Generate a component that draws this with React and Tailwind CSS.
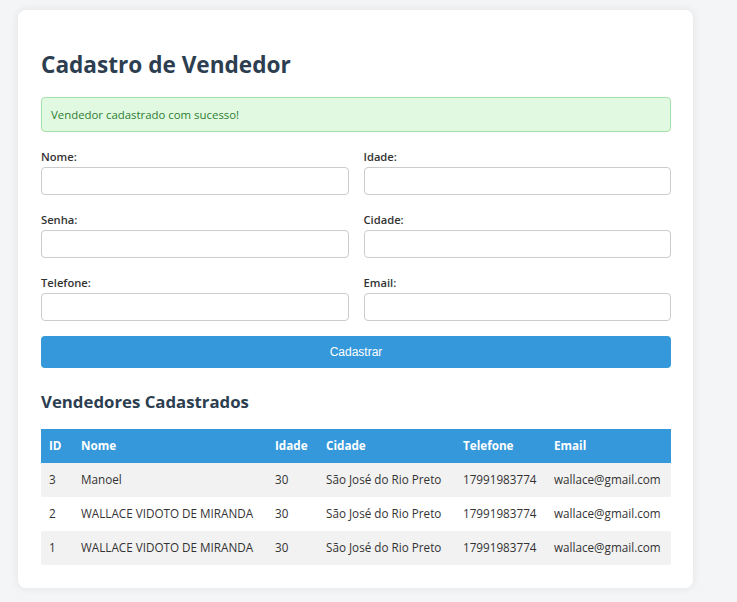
import React from "react";

const vendedores = [
  { id: 3, nome: "Manoel", idade: 30, cidade: "São José do Rio Preto", telefone: "17991983774", email: "wallace@gmail.com" },
  { id: 2, nome: "WALLACE VIDOTO DE MIRANDA", idade: 30, cidade: "São José do Rio Preto", telefone: "17991983774", email: "wallace@gmail.com" },
  { id: 1, nome: "WALLACE VIDOTO DE MIRANDA", idade: 30, cidade: "São José do Rio Preto", telefone: "17991983774", email: "wallace@gmail.com" },
];

function Field({ label, type = "text" }) {
  return (
    <div className="flex flex-col">
      <label className="mb-[2px] text-[11.2px] font-semibold leading-[17px] text-[#333]">{label}</label>
      <input
        type={type}
        className="h-[28px] w-full rounded-[4px] border border-[#ccc] bg-white px-2 text-[13px] outline-none"
      />
    </div>
  );
}

export default function App() {
  return (
    <div className="min-h-screen bg-[#f4f5f7] pt-[10px] pb-[14px] font-['Open_Sans',sans-serif]">
      <div className="ml-[18px] w-[675px] rounded-[8px] bg-white pl-[23px] pr-[22px] pt-[39px] pb-[23px] shadow-[0_0_10px_rgba(0,0,0,0.08)]">
        {/* Título */}
        <h1 className="text-[22.6px] font-bold leading-[32px] text-[#2c3e50]">Cadastro de Vendedor</h1>

        {/* Mensagem de sucesso */}
        <div className="mt-[16px] flex h-[35px] items-center rounded-[4px] border border-[#a8dfa9] bg-[#e0f9e0] px-[9px] text-[11.4px] text-[#2e7d32]">
          Vendedor cadastrado com sucesso!
        </div>

        {/* Formulário */}
        <form className="mt-[16px]" onSubmit={(e) => e.preventDefault()}>
          <div className="grid grid-cols-2 gap-x-[15px] gap-y-[16px]">
            <Field label="Nome:" />
            <Field label="Idade:" type="number" />
            <Field label="Senha:" type="password" />
            <Field label="Cidade:" />
            <Field label="Telefone:" />
            <Field label="Email:" type="email" />
          </div>
          <button
            type="submit"
            className="mt-[15px] h-[32px] w-full rounded-[4px] bg-[#3498db] font-['Liberation_Sans',sans-serif] text-[12px] text-white"
          >
            Cadastrar
          </button>
        </form>

        {/* Lista */}
        <h2 className="mt-[22px] text-[16.8px] font-bold leading-[24px] text-[#2c3e50]">Vendedores Cadastrados</h2>

        <table className="mt-[15px] w-full table-fixed border-collapse text-left text-[11.7px] text-[#333]">
          <colgroup>
            <col className="w-[32px]" />
            <col className="w-[194px]" />
            <col className="w-[51px]" />
            <col className="w-[137px]" />
            <col className="w-[91px]" />
            <col />
          </colgroup>
          <thead>
            <tr className="h-[34px] bg-[#3498db] text-white">
              <th className="pl-[8px] font-bold">ID</th>
              <th className="pl-[8px] font-bold">Nome</th>
              <th className="pl-[8px] font-bold">Idade</th>
              <th className="pl-[8px] font-bold">Cidade</th>
              <th className="pl-[8px] font-bold">Telefone</th>
              <th className="pl-[8px] font-bold">Email</th>
            </tr>
          </thead>
          <tbody>
            {vendedores.map((v, i) => (
              <tr key={v.id} className={i % 2 === 0 ? "h-[34px] bg-[#f2f2f2]" : "h-[34px] bg-white"}>
                <td className="pl-[8px]">{v.id}</td>
                <td className="pl-[8px] whitespace-nowrap">{v.nome}</td>
                <td className="pl-[8px]">{v.idade}</td>
                <td className="pl-[8px] whitespace-nowrap">{v.cidade}</td>
                <td className="pl-[8px]">{v.telefone}</td>
                <td className="pl-[8px] whitespace-nowrap">{v.email}</td>
              </tr>
            ))}
          </tbody>
        </table>
      </div>
    </div>
  );
}
